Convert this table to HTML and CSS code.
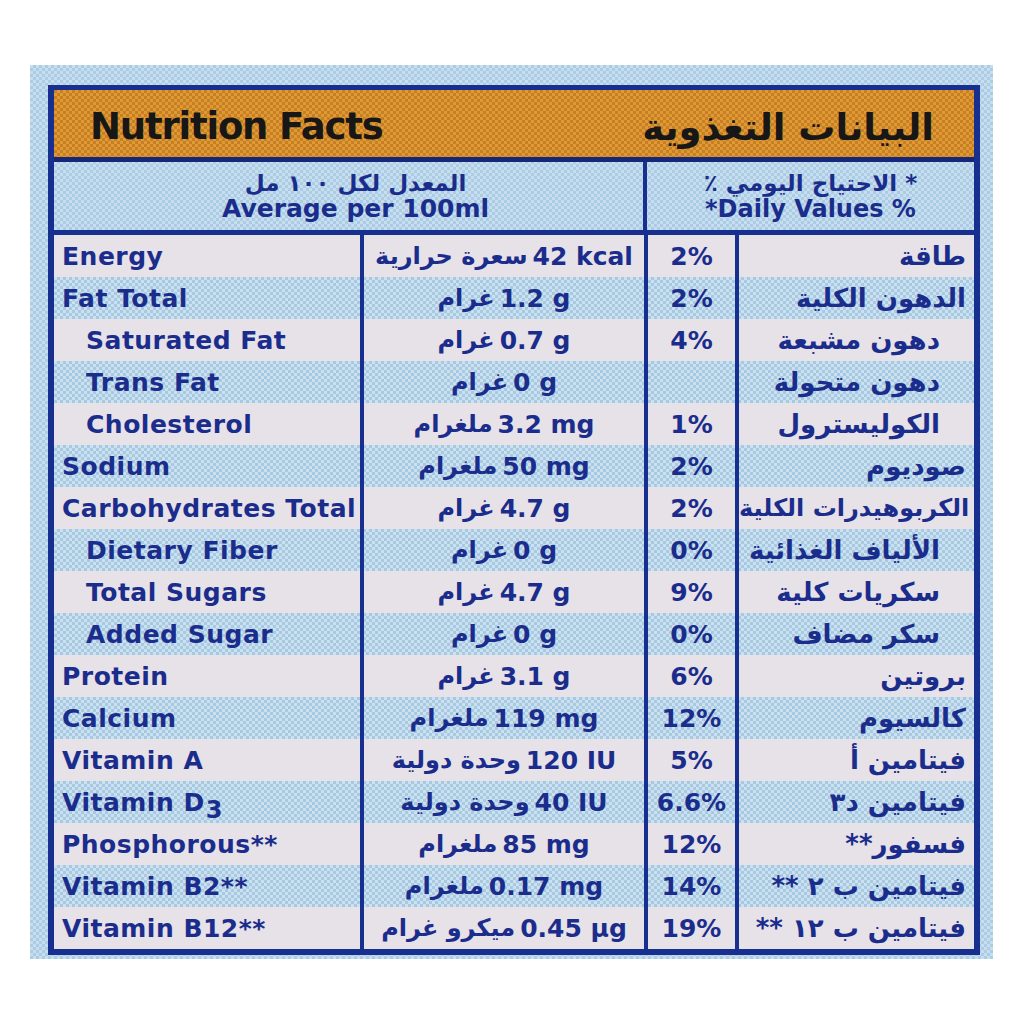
FILE: index.html
```html
<!DOCTYPE html>
<html lang="en">
<head>
<meta charset="utf-8">
<title>Nutrition Facts</title>
<link rel="stylesheet" href="styles.css">
</head>
<body>
<div class="photo">
  <div class="label">
    <div class="title-bar">
      <span class="title-en">Nutrition Facts</span>
      <span class="title-ar" dir="rtl" lang="ar">البيانات التغذوية</span>
    </div>
    <div class="sub-head">
      <div class="sub-cell">
        <span class="ar" dir="rtl" lang="ar">المعدل لكل ١٠٠ مل</span>
        <span>Average per 100ml</span>
      </div>
      <div class="sub-cell sub-cell--dv">
        <span class="ar" dir="rtl" lang="ar">* الاحتياج اليومي ٪</span>
        <span>*Daily Values %</span>
      </div>
    </div>
    <div class="rows">
      <div class="row"><div class="name">Energy</div><div class="val"><span class="ar">سعرة حرارية</span><span>42 kcal</span></div><div class="pct">2%</div><div class="arname" dir="rtl" lang="ar">طاقة</div></div>
      <div class="row"><div class="name">Fat Total</div><div class="val"><span class="ar">غرام</span><span>1.2 g</span></div><div class="pct">2%</div><div class="arname" dir="rtl" lang="ar">الدهون الكلية</div></div>
      <div class="row row--sub"><div class="name">Saturated Fat</div><div class="val"><span class="ar">غرام</span><span>0.7 g</span></div><div class="pct">4%</div><div class="arname" dir="rtl" lang="ar">دهون مشبعة</div></div>
      <div class="row row--sub"><div class="name">Trans Fat</div><div class="val"><span class="ar">غرام</span><span>0 g</span></div><div class="pct"></div><div class="arname" dir="rtl" lang="ar">دهون متحولة</div></div>
      <div class="row row--sub"><div class="name">Cholesterol</div><div class="val"><span class="ar">ملغرام</span><span>3.2 mg</span></div><div class="pct">1%</div><div class="arname" dir="rtl" lang="ar">الكوليسترول</div></div>
      <div class="row"><div class="name">Sodium</div><div class="val"><span class="ar">ملغرام</span><span>50 mg</span></div><div class="pct">2%</div><div class="arname" dir="rtl" lang="ar">صوديوم</div></div>
      <div class="row"><div class="name">Carbohydrates Total</div><div class="val"><span class="ar">غرام</span><span>4.7 g</span></div><div class="pct">2%</div><div class="arname arname--long" dir="rtl" lang="ar">الكربوهيدرات الكلية</div></div>
      <div class="row row--sub"><div class="name">Dietary Fiber</div><div class="val"><span class="ar">غرام</span><span>0 g</span></div><div class="pct">0%</div><div class="arname" dir="rtl" lang="ar">الألياف الغذائية</div></div>
      <div class="row row--sub"><div class="name">Total Sugars</div><div class="val"><span class="ar">غرام</span><span>4.7 g</span></div><div class="pct">9%</div><div class="arname" dir="rtl" lang="ar">سكريات كلية</div></div>
      <div class="row row--sub"><div class="name">Added Sugar</div><div class="val"><span class="ar">غرام</span><span>0 g</span></div><div class="pct">0%</div><div class="arname" dir="rtl" lang="ar">سكر مضاف</div></div>
      <div class="row"><div class="name">Protein</div><div class="val"><span class="ar">غرام</span><span>3.1 g</span></div><div class="pct">6%</div><div class="arname" dir="rtl" lang="ar">بروتين</div></div>
      <div class="row"><div class="name">Calcium</div><div class="val"><span class="ar">ملغرام</span><span>119 mg</span></div><div class="pct">12%</div><div class="arname" dir="rtl" lang="ar">كالسيوم</div></div>
      <div class="row"><div class="name">Vitamin A</div><div class="val"><span class="ar">وحدة دولية</span><span>120 IU</span></div><div class="pct">5%</div><div class="arname" dir="rtl" lang="ar">فيتامين أ</div></div>
      <div class="row"><div class="name"><span>Vitamin D</span><sub>3</sub></div><div class="val"><span class="ar">وحدة دولية</span><span>40 IU</span></div><div class="pct">6.6%</div><div class="arname" dir="rtl" lang="ar">فيتامين د٣</div></div>
      <div class="row"><div class="name">Phosphorous**</div><div class="val"><span class="ar">ملغرام</span><span>85 mg</span></div><div class="pct">12%</div><div class="arname" dir="rtl" lang="ar">فسفور**</div></div>
      <div class="row"><div class="name">Vitamin B2**</div><div class="val"><span class="ar">ملغرام</span><span>0.17 mg</span></div><div class="pct">14%</div><div class="arname" dir="rtl" lang="ar">فيتامين ب ٢ **</div></div>
      <div class="row"><div class="name">Vitamin B12**</div><div class="val"><span class="ar">ميكرو غرام</span><span>0.45 µg</span></div><div class="pct">19%</div><div class="arname" dir="rtl" lang="ar">فيتامين ب ١٢ **</div></div>
    </div>
  </div>
</div>
</body>
</html>
```
FILE: styles.css
```css
html, body {
  margin: 0;
  padding: 0;
  background: #ffffff;
}

body {
  font-family: "DejaVu Sans", "Noto Sans", sans-serif;
  font-weight: bold;
  color: #1b2d8c;
}

.photo {
  margin: 65px 0 0 30px;
  width: 963px;
  height: 894px;
  padding: 20px 13px 0 18px;
  box-sizing: border-box;
  background: repeating-conic-gradient(#abcde3 0 25%, #c8def0 0 50%) 0 0 / 6px 6px;
}

.label {
  border: 6px solid #17308f;
  border-top-width: 5px;
  display: flex;
  flex-direction: column;
}

.title-bar {
  height: 67px;
  border-bottom: 5px solid #16277a;
  background: repeating-conic-gradient(#e09a34 0 25%, #c67f25 0 50%) 0 0 / 6px 6px;
  display: flex;
  align-items: center;
  justify-content: space-between;
  padding: 0 40px 0 36px;
  color: #171717;
}

.title-en {
  font-size: 37px;
  letter-spacing: -1.2px;
  margin-top: 6px;
}

.title-ar {
  font-size: 37px;
  margin-top: 8px;
}

.sub-head {
  height: 68px;
  border-bottom: 5px solid #17308f;
  display: grid;
  grid-template-columns: 589px 1fr;
  font-size: 25px;
  line-height: 26px;
}

.sub-cell {
  display: flex;
  flex-direction: column;
  align-items: center;
  justify-content: center;
  padding-left: 14px;
}

.sub-cell--dv {
  border-left: 4px solid #17308f;
  padding-left: 0;
  font-size: 24px;
}

.sub-cell .ar {
  font-size: 23px;
}

.rows {
  display: flex;
  flex-direction: column;
}

.row {
  height: 42px;
  display: grid;
  grid-template-columns: 306px 284px 91px 1fr;
  font-size: 25px;
  background: #e7e1e8;
}

.row:nth-child(even) {
  background: repeating-conic-gradient(#a6cae2 0 25%, #cde0ef 0 50%) 0 0 / 6px 6px;
}

.row > div {
  display: flex;
  align-items: center;
}

.name {
  padding-left: 8px;
  white-space: nowrap;
  letter-spacing: 0.5px;
}

.name sub {
  align-self: flex-end;
  font-size: 24px;
  line-height: 1;
  margin-bottom: 1px;
  margin-left: 1px;
}

.row--sub .name {
  padding-left: 32px;
}

.val {
  border-left: 4px solid #17308f;
  justify-content: center;
  gap: 5px;
}

.ar {
  font-size: 24px;
}

.pct {
  border-left: 4px solid #17308f;
  justify-content: center;
}

.arname {
  border-left: 4px solid #17308f;
  padding-right: 8px;
  font-size: 26px;
  white-space: nowrap;
}

.arname--long {
  font-size: 24px;
}

.row--sub .arname {
  padding-right: 34px;
}
```
